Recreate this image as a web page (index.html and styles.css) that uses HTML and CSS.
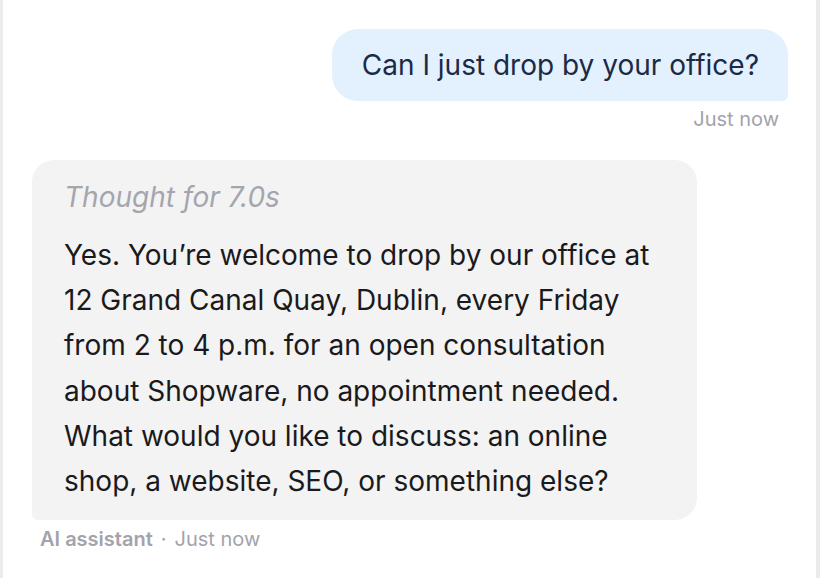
FILE: index.html
```html
<!DOCTYPE html>
<html lang="en">
<head>
    <meta charset="UTF-8">
    <meta name="viewport" content="width=device-width, initial-scale=1.0">
    <title>Chat</title>
    <link rel="stylesheet" href="styles.css">
</head>
<body>
    <div class="chat">
        <div class="message message-user">
            <div class="bubble bubble-user">Can I just drop by your office?</div>
            <div class="meta meta-user">Just now</div>
        </div>
        <div class="message message-bot">
            <div class="bubble bubble-bot">
                <div class="thought">Thought for 7.0s</div>
                <p class="answer">Yes. You’re welcome to drop by our office at 12 Grand Canal Quay, Dublin, every Friday from 2 to 4 p.m. for an open consultation about Shopware, no appointment needed. What would you like to discuss: an online shop, a website, SEO, or something else?</p>
            </div>
            <div class="meta meta-bot"><strong>AI assistant</strong><span class="dot">·</span>Just now</div>
        </div>
    </div>
</body>
</html>
```

FILE: styles.css
```css
body {
    margin: 0;
    font-family: Inter, "Noto Sans", sans-serif;
    background-color: #ffffff;
}
.chat {
    height: 578px;
    box-sizing: border-box;
    border-left: 3px solid #ebebeb;
    border-right: 4px solid #ebebeb;
    padding: 29px 28px 0 29px;
    display: flex;
    flex-direction: column;
}
.message {
    display: flex;
    flex-direction: column;
}
.message-user {
    align-items: flex-end;
    margin-bottom: 29px;
}
.message-bot {
    align-items: flex-start;
}
.bubble {
    box-sizing: border-box;
}
.bubble-user {
    background-color: #e3f0fe;
    color: #1b2a45;
    font-size: 28px;
    line-height: 34px;
    padding: 19px 29px 19px 30px;
    border-radius: 26px 26px 6px 26px;
}
.bubble-bot {
    background-color: #f3f3f3;
    color: #1a1a1c;
    max-width: 665px;
    padding: 19px 32px 16px 32px;
    border-radius: 22px 22px 22px 6px;
}
.thought {
    font-size: 28px;
    line-height: 36px;
    font-style: italic;
    color: #a5a5ad;
}
.answer {
    margin: 18px 0 0 0;
    font-size: 28px;
    line-height: 45.2px;
}
.meta {
    font-size: 20px;
    line-height: 24px;
    color: #a3a3ab;
    margin-top: 6px;
}
.meta-user {
    margin-right: 9px;
}
.meta-bot {
    margin-top: 7px;
    margin-left: 8px;
}
.meta-bot strong {
    font-weight: 600;
}
.dot {
    margin: 0 8px;
}
```
